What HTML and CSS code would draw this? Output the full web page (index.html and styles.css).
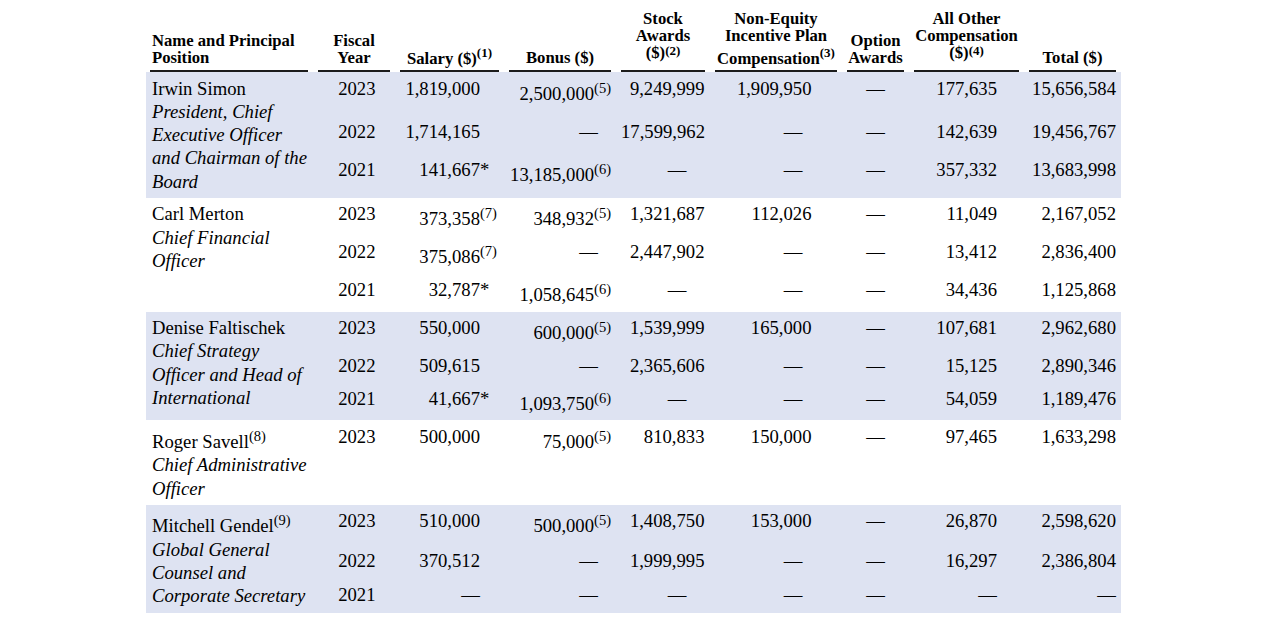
FILE: index.html
```html
<!DOCTYPE html>
<html lang="en">
<head>
<meta charset="utf-8">
<title>Summary Compensation Table</title>
<link rel="stylesheet" href="styles.css">
</head>
<body>
<div class="page">
<table class="comp">
  <colgroup>
    <col class="c-name"><col class="c-year"><col class="c-sal"><col class="c-bon"><col class="c-stk"><col class="c-neq"><col class="c-opt"><col class="c-oth"><col class="c-tot">
  </colgroup>
  <thead>
    <tr>
      <th class="name"><div class="h">Name and Principal<br>Position</div></th>
      <th><div class="h">Fiscal<br>Year</div></th>
      <th><div class="h">Salary ($)<sup>(1)</sup></div></th>
      <th><div class="h">Bonus ($)</div></th>
      <th class="flat"><div class="h">Stock<br>Awards<br>($)<sup>(2)</sup></div></th>
      <th><div class="h">Non-Equity<br>Incentive Plan<br>Compensation<sup>(3)</sup></div></th>
      <th><div class="h">Option<br>Awards</div></th>
      <th class="flat"><div class="h">All Other<br>Compensation<br>($)<sup>(4)</sup></div></th>
      <th><div class="h">Total ($)</div></th>
    </tr>
  </thead>
  <tbody class="alt">
    <tr>
      <td class="name" rowspan="3">Irwin Simon<br><i>President, Chief<br>Executive Officer<br>and Chairman of the<br>Board</i></td>
      <td class="yr">2023</td>
      <td class="sal">1,819,000<span class="sfx"></span></td>
      <td class="bon">2,500,000<sup>(5)</sup></td>
      <td class="stk">9,249,999</td>
      <td class="neq">1,909,950</td>
      <td class="opt">—</td>
      <td class="oth">177,635</td>
      <td class="tot">15,656,584</td>
    </tr>
    <tr>
      <td class="yr">2022</td>
      <td class="sal">1,714,165<span class="sfx"></span></td>
      <td class="bon dash">—</td>
      <td class="stk">17,599,962</td>
      <td class="neq dash">—</td>
      <td class="opt">—</td>
      <td class="oth">142,639</td>
      <td class="tot">19,456,767</td>
    </tr>
    <tr>
      <td class="yr">2021</td>
      <td class="sal">141,667<span class="sfx">*</span></td>
      <td class="bon">13,185,000<sup>(6)</sup></td>
      <td class="stk dash">—</td>
      <td class="neq dash">—</td>
      <td class="opt">—</td>
      <td class="oth">357,332</td>
      <td class="tot">13,683,998</td>
    </tr>
  </tbody>
  <tbody>
    <tr>
      <td class="name" rowspan="3">Carl Merton<br><i>Chief Financial<br>Officer</i></td>
      <td class="yr">2023</td>
      <td class="sal">373,358<span class="sfx"><sup>(7)</sup></span></td>
      <td class="bon">348,932<sup>(5)</sup></td>
      <td class="stk">1,321,687</td>
      <td class="neq">112,026</td>
      <td class="opt">—</td>
      <td class="oth">11,049</td>
      <td class="tot">2,167,052</td>
    </tr>
    <tr>
      <td class="yr">2022</td>
      <td class="sal">375,086<span class="sfx"><sup>(7)</sup></span></td>
      <td class="bon dash">—</td>
      <td class="stk">2,447,902</td>
      <td class="neq dash">—</td>
      <td class="opt">—</td>
      <td class="oth">13,412</td>
      <td class="tot">2,836,400</td>
    </tr>
    <tr>
      <td class="yr">2021</td>
      <td class="sal">32,787<span class="sfx">*</span></td>
      <td class="bon">1,058,645<sup>(6)</sup></td>
      <td class="stk dash">—</td>
      <td class="neq dash">—</td>
      <td class="opt">—</td>
      <td class="oth">34,436</td>
      <td class="tot">1,125,868</td>
    </tr>
  </tbody>
  <tbody class="alt">
    <tr>
      <td class="name" rowspan="3">Denise Faltischek<br><i>Chief Strategy<br>Officer and Head of<br>International</i></td>
      <td class="yr">2023</td>
      <td class="sal">550,000<span class="sfx"></span></td>
      <td class="bon">600,000<sup>(5)</sup></td>
      <td class="stk">1,539,999</td>
      <td class="neq">165,000</td>
      <td class="opt">—</td>
      <td class="oth">107,681</td>
      <td class="tot">2,962,680</td>
    </tr>
    <tr>
      <td class="yr">2022</td>
      <td class="sal">509,615<span class="sfx"></span></td>
      <td class="bon dash">—</td>
      <td class="stk">2,365,606</td>
      <td class="neq dash">—</td>
      <td class="opt">—</td>
      <td class="oth">15,125</td>
      <td class="tot">2,890,346</td>
    </tr>
    <tr>
      <td class="yr">2021</td>
      <td class="sal">41,667<span class="sfx">*</span></td>
      <td class="bon">1,093,750<sup>(6)</sup></td>
      <td class="stk dash">—</td>
      <td class="neq dash">—</td>
      <td class="opt">—</td>
      <td class="oth">54,059</td>
      <td class="tot">1,189,476</td>
    </tr>
  </tbody>
  <tbody>
    <tr>
      <td class="name">Roger Savell<sup>(8)</sup><br><i>Chief Administrative<br>Officer</i></td>
      <td class="yr">2023</td>
      <td class="sal">500,000<span class="sfx"></span></td>
      <td class="bon">75,000<sup>(5)</sup></td>
      <td class="stk">810,833</td>
      <td class="neq">150,000</td>
      <td class="opt">—</td>
      <td class="oth">97,465</td>
      <td class="tot">1,633,298</td>
    </tr>
  </tbody>
  <tbody class="alt">
    <tr>
      <td class="name" rowspan="3">Mitchell Gendel<sup>(9)</sup><br><i>Global General<br>Counsel and<br>Corporate Secretary</i></td>
      <td class="yr">2023</td>
      <td class="sal">510,000<span class="sfx"></span></td>
      <td class="bon">500,000<sup>(5)</sup></td>
      <td class="stk">1,408,750</td>
      <td class="neq">153,000</td>
      <td class="opt">—</td>
      <td class="oth">26,870</td>
      <td class="tot">2,598,620</td>
    </tr>
    <tr>
      <td class="yr">2022</td>
      <td class="sal">370,512<span class="sfx"></span></td>
      <td class="bon dash">—</td>
      <td class="stk">1,999,995</td>
      <td class="neq dash">—</td>
      <td class="opt">—</td>
      <td class="oth">16,297</td>
      <td class="tot">2,386,804</td>
    </tr>
    <tr>
      <td class="yr">2021</td>
      <td class="sal">—<span class="sfx"></span></td>
      <td class="bon dash">—</td>
      <td class="stk dash">—</td>
      <td class="neq dash">—</td>
      <td class="opt">—</td>
      <td class="oth">—</td>
      <td class="tot">—</td>
    </tr>
  </tbody>
</table>
</div>
</body>
</html>
```

FILE: styles.css
```css
html, body {
  margin: 0;
  background: #ffffff;
}

body {
  font-family: "Liberation Serif", "Times New Roman", serif;
  color: #000000;
}

.page {
  padding: 9.5px 0 0 146px;
}

.comp {
  border-collapse: collapse;
  table-layout: fixed;
  width: 975px;
  font-size: 18.67px;
  line-height: 23.25px;
}

.c-name { width: 167px; }
.c-year { width: 82px; }
.c-sal  { width: 109px; }
.c-bon  { width: 112px; }
.c-stk  { width: 94px; }
.c-neq  { width: 132px; }
.c-opt  { width: 67px; }
.c-oth  { width: 115px; }
.c-tot  { width: 97px; }

.comp th {
  font-weight: bold;
  font-size: 16.67px;
  line-height: 17px;
  vertical-align: bottom;
  text-align: center;
  padding: 0 5px;
}

.comp th .h {
  border-bottom: 2px solid #1c1c1c;
  padding-bottom: 4px;
}

.comp th.name {
  text-align: left;
  padding-left: 4px;
}

.comp th.name .h {
  padding-left: 2px;
}

.comp th.flat .h {
  padding-bottom: 9px;
}

.comp sup {
  font-size: 0.78em;
  vertical-align: super;
}

.comp th.flat sup {
  line-height: 0;
  vertical-align: 3px;
}

.comp td sup {
  line-height: 22.5px;
}

.comp td {
  vertical-align: top;
  padding: 4.5px 5px 5px;
  text-align: right;
  white-space: nowrap;
}

.comp tbody.alt td {
  background: #dee3f2;
}

.comp td.name {
  text-align: left;
  padding-left: 6px;
}

.comp td.yr { padding-right: 19.5px; }

.sfx {
  display: inline-block;
  width: 19px;
  text-align: left;
}

.comp td.bon.dash { padding-right: 18px; }
.comp td.stk { padding-right: 5.5px; }
.comp td.stk.dash { padding-right: 23.5px; }
.comp td.neq { padding-right: 30.5px; }
.comp td.neq.dash { padding-right: 39.5px; }
.comp td.opt { text-align: center; }
.comp td.oth { padding-right: 27px; }
.comp td.tot { padding-right: 5px; }
```
